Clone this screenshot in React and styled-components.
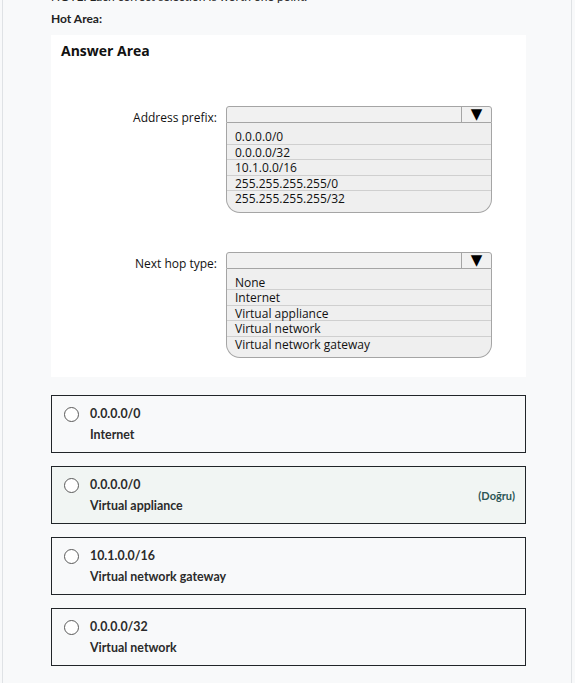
import React from "react";
import styled, { createGlobalStyle } from "styled-components";

const Global = createGlobalStyle`
  html, body { margin: 0; padding: 0; background: #f8f9fa; }
  body { font-family: Lato, "Liberation Sans", sans-serif; overflow: hidden; }
`;

const Page = styled.div`
  margin-left: 2px;
  width: 570px;
  height: 683px;
  border-left: 1px solid #dfe2e5;
  border-right: 1px solid #dfe2e5;
  background: #f8f9fa;
  box-sizing: border-box;
  padding-left: 48px;
  overflow: hidden;
`;

const Note = styled.p`
  margin: -10px 0 0 0;
  font-size: 12px;
  line-height: 14px;
  color: #222;
`;

const HotLabel = styled.p`
  margin: 7px 0 0 0;
  font-size: 12px;
  line-height: 16px;
  font-weight: 700;
  color: #222;
`;

const Exhibit = styled.div`
  margin-top: 8px;
  width: 475px;
  height: 342px;
  background: #fff;
  box-sizing: border-box;
  padding: 7px 0 0 10px;
  font-family: "Open Sans", "Noto Sans", sans-serif;
`;

const ExhibitTitle = styled.div`
  font-size: 14px;
  font-weight: 700;
  line-height: 18px;
  color: #111;
`;

const Field = styled.div`
  display: grid;
  grid-template-columns: 156px 266px;
  column-gap: 9px;
  margin-top: ${(p) => p.$top}px;
`;

const FieldLabel = styled.div`
  text-align: right;
  font-size: 12px;
  line-height: 17px;
  padding-top: 3px;
  color: #111;
`;

const Dropdown = styled.div`
  display: flex;
  flex-direction: column;
`;

const DropHead = styled.div`
  display: flex;
  height: 17px;
  border: 1px solid #a5a5a5;
  border-radius: 3px 3px 0 0;
  background: #f1f1f1;
  box-sizing: border-box;
`;

const DropSpacer = styled.div`
  flex: 1;
`;

const Arrow = styled.div`
  width: 29px;
  border-left: 1px solid #a5a5a5;
  display: flex;
  align-items: center;
  justify-content: center;
  font-family: "DejaVu Sans", sans-serif;
  font-size: 15px;
  line-height: 15px;
  color: #000;
`;

const DropList = styled.div`
  border: 1px solid #a5a5a5;
  border-top: none;
  border-radius: 0 0 14px 14px;
  background: #efefef;
  padding: 6px 0 5px 0;
`;

const DropItem = styled.div`
  height: 15.5px;
  line-height: 15.5px;
  padding-left: 8px;
  font-size: 12px;
  color: #111;
  box-sizing: border-box;
  border-bottom: ${(p) => (p.$last ? "none" : "1px solid #cfcfcf")};
`;

const Options = styled.div`
  display: flex;
  flex-direction: column;
  gap: 13px;
  margin-top: 18px;
  width: 475px;
`;

const Option = styled.div`
  position: relative;
  height: 58px;
  box-sizing: border-box;
  border: 1px solid #212529;
  background: ${(p) => (p.$correct ? "#f1f5f3" : "#f8f9fa")};
  display: flex;
  align-items: flex-start;
  padding: 10px 10px 0 12px;
`;

const Radio = styled.span`
  width: 15px;
  height: 15px;
  border: 1.3px solid #5a5a5a;
  border-radius: 50%;
  box-sizing: border-box;
  margin-top: 1px;
  flex: none;
  background: #fff;
`;

const OptionText = styled.div`
  margin-left: 11px;
  display: flex;
  flex-direction: column;
  gap: 6px;
  flex: 1;
  font-size: 12.4px;
  line-height: 15px;
  font-weight: 700;
  color: #2b2b2b;
`;

const CorrectTag = styled.span`
  align-self: center;
  margin-top: -10px;
  font-size: 11px;
  font-weight: 700;
  color: #2c5555;
`;

const prefixes = ["0.0.0.0/0", "0.0.0.0/32", "10.1.0.0/16", "255.255.255.255/0", "255.255.255.255/32"];
const hops = ["None", "Internet", "Virtual appliance", "Virtual network", "Virtual network gateway"];

const answers = [
  { a: "0.0.0.0/0", b: "Internet" },
  { a: "0.0.0.0/0", b: "Virtual appliance", correct: true },
  { a: "10.1.0.0/16", b: "Virtual network gateway" },
  { a: "0.0.0.0/32", b: "Virtual network" },
];

function Select({ items }) {
  return (
    <Dropdown>
      <DropHead>
        <DropSpacer />
        <Arrow>▼</Arrow>
      </DropHead>
      <DropList>
        {items.map((it, i) => (
          <DropItem key={it} $last={i === items.length - 1}>
            {it}
          </DropItem>
        ))}
      </DropList>
    </Dropdown>
  );
}

export default function App() {
  return (
    <>
      <Global />
      <Page>
        <Note>NOTE: Each correct selection is worth one point.</Note>
        <HotLabel>Hot Area:</HotLabel>
        <Exhibit>
          <ExhibitTitle>Answer Area</ExhibitTitle>
          <Field $top={46}>
            <FieldLabel>Address prefix:</FieldLabel>
            <Select items={prefixes} />
          </Field>
          <Field $top={39}>
            <FieldLabel>Next hop type:</FieldLabel>
            <Select items={hops} />
          </Field>
        </Exhibit>
        <Options>
          {answers.map((o, i) => (
            <Option key={i} $correct={o.correct}>
              <Radio />
              <OptionText>
                <span>{o.a}</span>
                <span>{o.b}</span>
              </OptionText>
              {o.correct && <CorrectTag>(Doğru)</CorrectTag>}
            </Option>
          ))}
        </Options>
      </Page>
    </>
  );
}
